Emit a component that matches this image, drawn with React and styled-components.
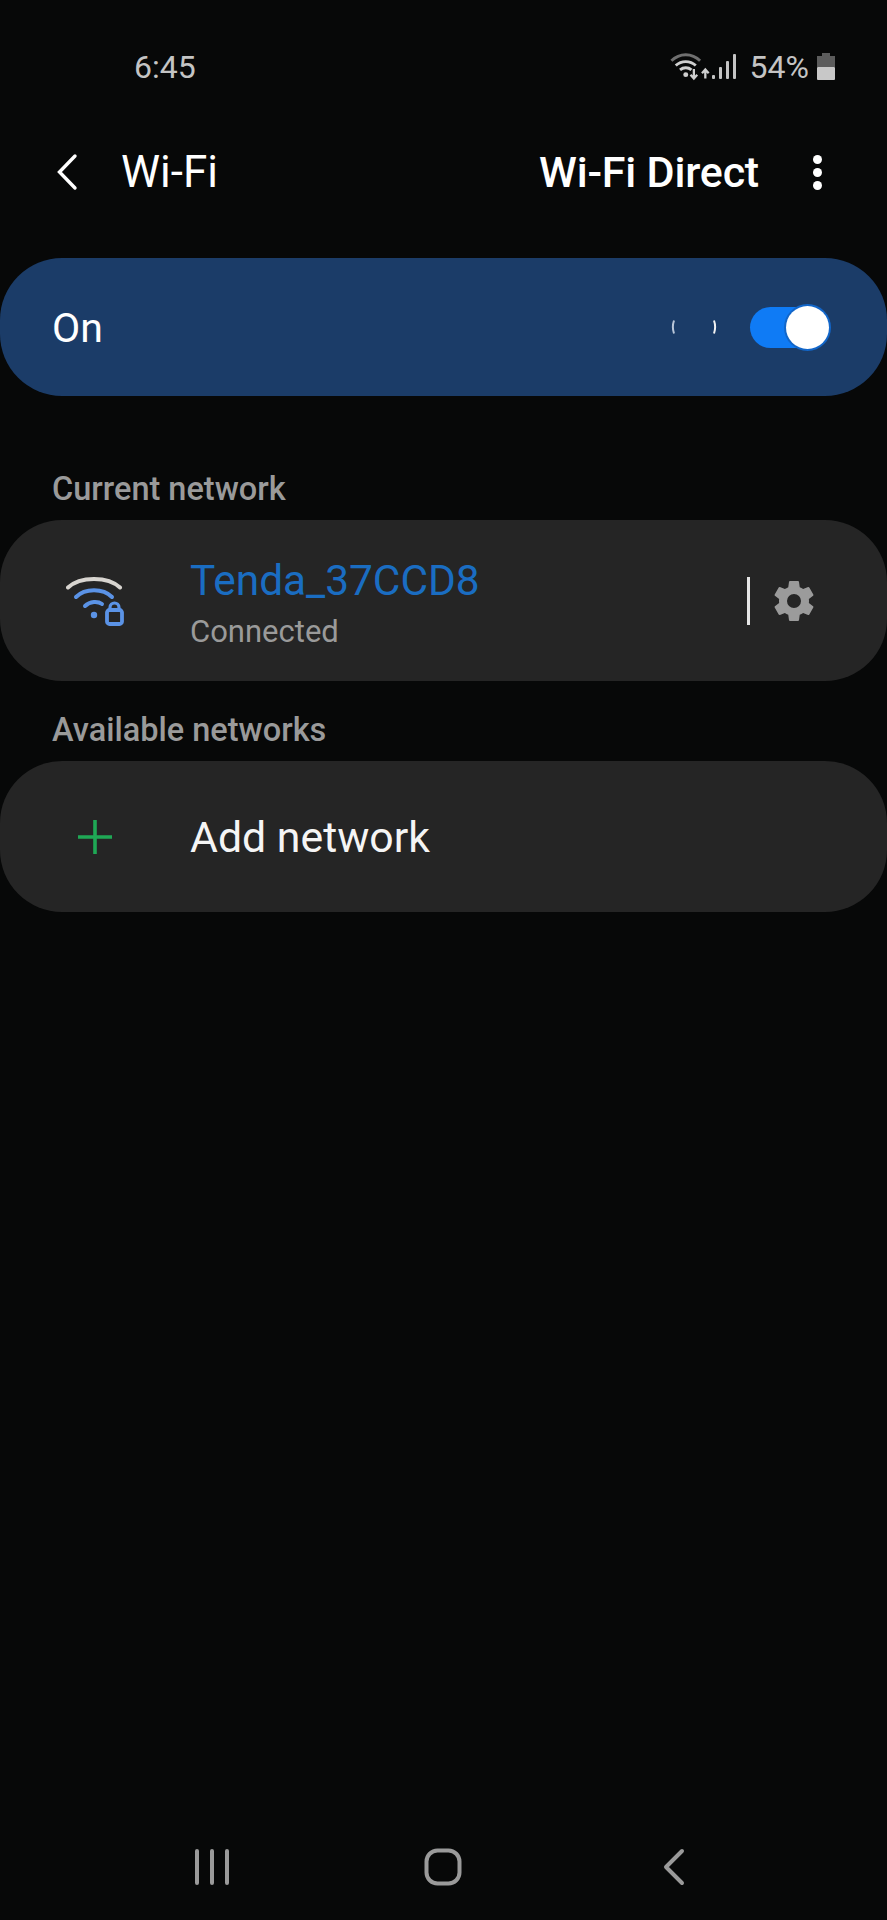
import styled, { createGlobalStyle } from 'styled-components'

const Global = createGlobalStyle`
   html, body {
      margin: 0;
      padding: 0;
      background: #070808;
   }
   * {
      box-sizing: border-box;
   }
`
const Screen = styled.div`
   width: 887px;
   height: 1920px;
   display: flex;
   flex-direction: column;
   background: #070808;
   font-family: Roboto, "Liberation Sans", sans-serif;
   color: #fff;
   overflow: hidden;
`
const StatusBar = styled.div`
   height: 90px;
   padding: 44px 52px 0 134px;
   display: flex;
   align-items: center;
   justify-content: space-between;
   color: #c4c4c4;
   font-size: 32px;
   line-height: 38px;
`
const StatusIcons = styled.div`
   display: flex;
   align-items: center;
`
const Percent = styled.span`
   margin: 0 8px 0 14px;
   font-size: 32px;
`
const Header = styled.div`
   height: 92px;
   margin-top: 36px;
   padding: 0 65px 0 56px;
   display: flex;
   align-items: center;
`
const Title = styled.div`
   margin-left: 43px;
   font-size: 44px;
   flex: 1;
`
const DirectLink = styled.div`
   font-size: 43px;
   font-weight: 500;
   letter-spacing: -0.2px;
`
const MoreDots = styled.div`
   margin-left: 54px;
   display: flex;
   flex-direction: column;
   gap: 4px;
`
const Dot = styled.span`
   width: 9px;
   height: 9px;
   border-radius: 50%;
   background: #fff;
`
const SwitchBar = styled.div`
   height: 138px;
   margin-top: 40px;
   border-radius: 62px;
   background: #1b3c68;
   padding: 0 59px 0 52px;
   display: flex;
   align-items: center;
   font-size: 41px;
`
const SwitchLabel = styled.div`
   flex: 1;
   margin-top: 1px;
`
const Toggle = styled.div`
   position: relative;
   width: 78px;
   height: 41px;
   margin-left: 33px;
   border-radius: 21px;
   background: #0f7bf5;
`
const Knob = styled.span`
   position: absolute;
   top: -1px;
   right: -1px;
   width: 43px;
   height: 43px;
   border-radius: 50%;
   background: #fff;
   box-shadow: 0 0 0 2px #1266c9;
`
const SectionLabel = styled.div`
   height: ${p => p.$height}px;
   padding: ${p => p.$top}px 0 0 52px;
   font-size: 32.5px;
   line-height: 36px;
   font-weight: 500;
   color: #9a9a9a;
`
const Card = styled.div`
   height: ${p => p.$height}px;
   border-radius: 62px;
   background: #252525;
   padding-left: 60px;
   display: flex;
   align-items: center;
`
const IconSlot = styled.div`
   width: 130px;
   padding-left: ${p => p.$inset}px;
   display: flex;
   align-items: center;
`
const NetworkText = styled.div`
   flex: 1;
   padding-top: 6px;
   display: flex;
   flex-direction: column;
   gap: 10px;
`
const NetworkName = styled.div`
   font-size: 42.4px;
   line-height: 46px;
   color: #1a6dc2;
`
const NetworkStatus = styled.div`
   font-size: 31px;
   line-height: 36px;
   color: #9a9a9a;
`
const Divider = styled.div`
   width: 3px;
   height: 48px;
   margin-right: -1px;
   background: #e6e6e6;
`
const GearSlot = styled.div`
   margin: 0 69px 0 21px;
   display: flex;
`
const AddLabel = styled.div`
   font-size: 42.8px;
   color: #f5f5f5;
`
const NavBar = styled.div`
   margin-top: auto;
   height: 106px;
   display: grid;
   grid-template-columns: 194px 230px 238px auto;
   align-items: center;
`
const NavCell = styled.div`
   grid-column: ${p => p.$col};
   display: flex;
`

const WifiStatusIcon = () => (
   <svg width="42" height="28" viewBox="0 0 44 28" fill="none">
      <path d="M1.5 7.5C10 -1 23 -1 31.5 7.5" stroke="#6f6f6f" strokeWidth="3" />
      <path d="M6 12.5C12 7 21 7 27 12.5" stroke="#cfcfcf" strokeWidth="3" />
      <path d="M10.5 17C14 14 19 14 22.5 17" stroke="#cfcfcf" strokeWidth="3" />
      <circle cx="16.5" cy="22" r="2.6" fill="#cfcfcf" />
      <path d="M25 16V25M21.5 22L25 26L28.5 22" stroke="#cfcfcf" strokeWidth="2.4" />
      <path d="M37 26V17M33.5 20.5L37 16.5L40.5 20.5" stroke="#cfcfcf" strokeWidth="2.4" />
   </svg>
)

const SignalIcon = () => (
   <svg width="24" height="26" viewBox="0 0 24 26" fill="#c4c4c4">
      <rect x="0" y="21" width="3" height="4" rx="1" />
      <rect x="7" y="13" width="3" height="12" rx="1" />
      <rect x="14" y="7" width="3" height="18" rx="1" />
      <rect x="21" y="0" width="3" height="25" rx="1" />
   </svg>
)

const BatteryIcon = () => (
   <svg width="18" height="28" viewBox="0 0 18 28">
      <rect x="5" y="0" width="8" height="3" fill="#5c5c5c" />
      <rect x="0" y="3" width="18" height="11" fill="#5c5c5c" />
      <rect x="0" y="14" width="18" height="13" rx="1" fill="#c8c8c8" />
   </svg>
)

const BackIcon = () => (
   <svg width="22" height="38" viewBox="0 0 22 38" fill="none">
      <path d="M19 3L3.5 19L19 35" stroke="#fff" strokeWidth="3.4" strokeLinecap="round" />
   </svg>
)

const SpinnerMarks = () => (
   <svg width="46" height="16" viewBox="0 0 46 16" fill="none">
      <path d="M3 1.5C1.6 5.5 1.6 10.5 3 14.5" stroke="#b9c6d8" strokeWidth="2" />
      <path d="M43 1.5C44.4 5.5 44.4 10.5 43 14.5" stroke="#f2f2f2" strokeWidth="2" />
   </svg>
)

const LockedWifiIcon = () => (
   <svg width="60" height="52" viewBox="0 0 60 52" fill="none">
      <path d="M2 12.5C14 1 42 1 54 12.5" stroke="#d8d5d0" strokeWidth="4" strokeLinecap="round" />
      <path d="M10 22C19 13 37 13 46 22" stroke="#5b93e6" strokeWidth="4" strokeLinecap="round" />
      <path d="M19 31C24 26 32 26 36 29" stroke="#5b93e6" strokeWidth="4" strokeLinecap="round" />
      <circle cx="28" cy="40" r="3.2" fill="#5b93e6" />
      <rect x="41" y="35" width="15" height="14" rx="2.5" stroke="#5b93e6" strokeWidth="3.8" />
      <path d="M44 35V32.5C44 26.5 53 26.5 53 32.5V35" stroke="#5b93e6" strokeWidth="3.2" />
   </svg>
)

const GearIcon = () => (
   <svg width="48" height="50" viewBox="0 0 24 24">
      <path
         fill="#9b9b9b"
         fillRule="evenodd"
         d="M19.43 12.98c.04-.32.07-.64.07-.98s-.03-.66-.07-.98l2.11-1.65c.19-.15.24-.42.12-.64l-2-3.46c-.12-.22-.39-.3-.61-.22l-2.49 1c-.52-.4-1.08-.73-1.69-.98l-.38-2.65C14.46 2.18 14.25 2 14 2h-4c-.25 0-.46.18-.49.42l-.38 2.65c-.61.25-1.17.59-1.69.98l-2.49-1c-.23-.09-.49 0-.61.22l-2 3.46c-.13.22-.07.49.12.64l2.11 1.65c-.04.32-.07.65-.07.98s.03.66.07.98l-2.11 1.65c-.19.15-.24.42-.12.64l2 3.46c.12.22.39.3.61.22l2.49-1c.52.4 1.08.73 1.69.98l.38 2.65c.03.24.24.42.49.42h4c.25 0 .46-.18.49-.42l.38-2.65c.61-.25 1.17-.59 1.69-.98l2.49 1c.23.09.49 0 .61-.22l2-3.46c.12-.22.07-.49-.12-.64l-2.11-1.65zM12 15.5a3.5 3.5 0 1 1 0-7 3.5 3.5 0 0 1 0 7z"
      />
   </svg>
)

const PlusIcon = () => (
   <svg width="36" height="36" viewBox="0 0 36 36">
      <path d="M18 1V35M1 18H35" stroke="#1fa855" strokeWidth="3.6" />
   </svg>
)

const RecentsIcon = () => (
   <svg width="36" height="36" viewBox="0 0 36 36">
      <path d="M3 2V34M18 2V34M33 2V34" stroke="#9a9a9a" strokeWidth="4" strokeLinecap="round" />
   </svg>
)

const HomeIcon = () => (
   <svg width="38" height="38" viewBox="0 0 38 38" fill="none">
      <rect x="2.5" y="2.5" width="33" height="33" rx="11" stroke="#9a9a9a" strokeWidth="4" />
   </svg>
)

const NavBackIcon = () => (
   <svg width="24" height="38" viewBox="0 0 24 38" fill="none">
      <path d="M20 3L4 19L20 35" stroke="#9a9a9a" strokeWidth="4" strokeLinecap="round" strokeLinejoin="round" />
   </svg>
)

const App = () => {
   return (
      <Screen>
         <Global />
         <StatusBar>
            <span>6:45</span>
            <StatusIcons>
               <WifiStatusIcon />
               <SignalIcon />
               <Percent>54%</Percent>
               <BatteryIcon />
            </StatusIcons>
         </StatusBar>
         <Header>
            <BackIcon />
            <Title>Wi-Fi</Title>
            <DirectLink>Wi-Fi Direct</DirectLink>
            <MoreDots>
               <Dot />
               <Dot />
               <Dot />
            </MoreDots>
         </Header>
         <SwitchBar>
            <SwitchLabel>On</SwitchLabel>
            <SpinnerMarks />
            <Toggle>
               <Knob />
            </Toggle>
         </SwitchBar>
         <SectionLabel $height={124} $top={75}>Current network</SectionLabel>
         <Card $height={161}>
            <IconSlot $inset={6}>
               <LockedWifiIcon />
            </IconSlot>
            <NetworkText>
               <NetworkName>Tenda_37CCD8</NetworkName>
               <NetworkStatus>Connected</NetworkStatus>
            </NetworkText>
            <Divider />
            <GearSlot>
               <GearIcon />
            </GearSlot>
         </Card>
         <SectionLabel $height={80} $top={31}>Available networks</SectionLabel>
         <Card $height={151}>
            <IconSlot $inset={17}>
               <PlusIcon />
            </IconSlot>
            <AddLabel>Add network</AddLabel>
         </Card>
         <NavBar>
            <NavCell $col={2}>
               <RecentsIcon />
            </NavCell>
            <NavCell $col={3}>
               <HomeIcon />
            </NavCell>
            <NavCell $col={4}>
               <NavBackIcon />
            </NavCell>
         </NavBar>
      </Screen>
   )
}

export default App
